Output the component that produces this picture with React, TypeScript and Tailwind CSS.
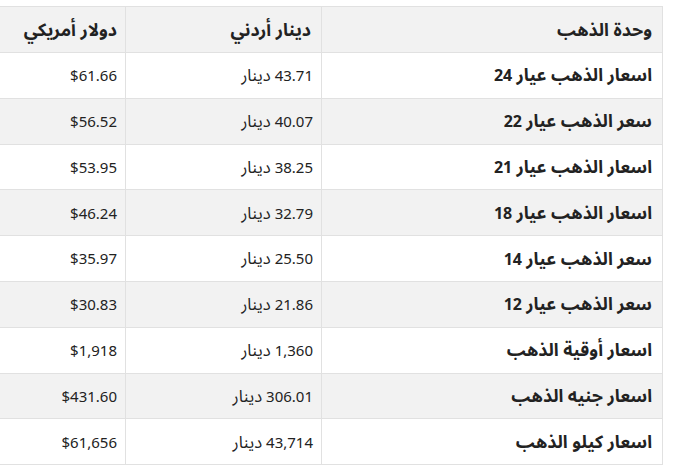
const rows = [
  { unit: "اسعار الذهب عيار 24", jod: "43.71 دينار", usd: "$61.66" },
  { unit: "سعر الذهب عيار 22", jod: "40.07 دينار", usd: "$56.52" },
  { unit: "اسعار الذهب عيار 21", jod: "38.25 دينار", usd: "$53.95" },
  { unit: "اسعار الذهب عيار 18", jod: "32.79 دينار", usd: "$46.24" },
  { unit: "سعر الذهب عيار 14", jod: "25.50 دينار", usd: "$35.97" },
  { unit: "سعر الذهب عيار 12", jod: "21.86 دينار", usd: "$30.83" },
  { unit: "اسعار أوقية الذهب", jod: "1,360 دينار", usd: "$1,918" },
  { unit: "اسعار جنيه الذهب", jod: "306.01 دينار", usd: "$431.60" },
  { unit: "اسعار كيلو الذهب", jod: "43,714 دينار", usd: "$61,656" },
];

// Arabic glyphs in the fallback font run small next to the Latin digits,
// so bump the Arabic runs up a little.
function Txt({ children }: { children: string }) {
  const parts = children.split(/([\u0600-\u06FF]+(?:\s+[\u0600-\u06FF]+)*)/);
  return (
    <>
      {parts.map((p, i) =>
        /[\u0600-\u06FF]/.test(p) ? (
          <span key={i} className="text-[1.11em] leading-none">
            {p}
          </span>
        ) : (
          p
        )
      )}
    </>
  );
}

export default function App() {
  return (
    <div className="bg-white w-[682px] h-[469px] overflow-hidden pt-[6px] font-['Noto_Sans','Noto_Sans_Arabic','DejaVu_Sans',sans-serif] text-[#222]">
      <table dir="rtl" className="w-[663px] -ml-px border-collapse table-fixed">
        <colgroup>
          <col className="w-[341px]" />
          <col className="w-[196px]" />
          <col className="w-[126px]" />
        </colgroup>
        <thead>
          <tr className="bg-[#f2f2f2] h-[46px]">
            <th className="border border-[#e1e1e1] px-[10px] text-right text-[16px] font-bold"><Txt>وحدة الذهب</Txt></th>
            <th className="border border-[#e1e1e1] px-[10px] text-right text-[16px] font-bold"><Txt>دينار أردني</Txt></th>
            <th className="border border-[#e1e1e1] px-[8px] text-right text-[16px] font-bold"><Txt>دولار أمريكي</Txt></th>
          </tr>
        </thead>
        <tbody>
          {rows.map((r, i) => (
            <tr key={i} className={`h-[45.8px] ${i % 2 === 1 ? "bg-[#f2f2f2]" : "bg-white"}`}>
              <td className="border border-[#e1e1e1] px-[10px] text-right text-[16px] font-bold"><Txt>{r.unit}</Txt></td>
              <td className="border border-[#e1e1e1] px-[8px] text-right text-[15px]"><Txt>{r.jod}</Txt></td>
              <td className="border border-[#e1e1e1] px-[8px] text-right text-[15px]">{r.usd}</td>
            </tr>
          ))}
        </tbody>
      </table>
    </div>
  );
}
